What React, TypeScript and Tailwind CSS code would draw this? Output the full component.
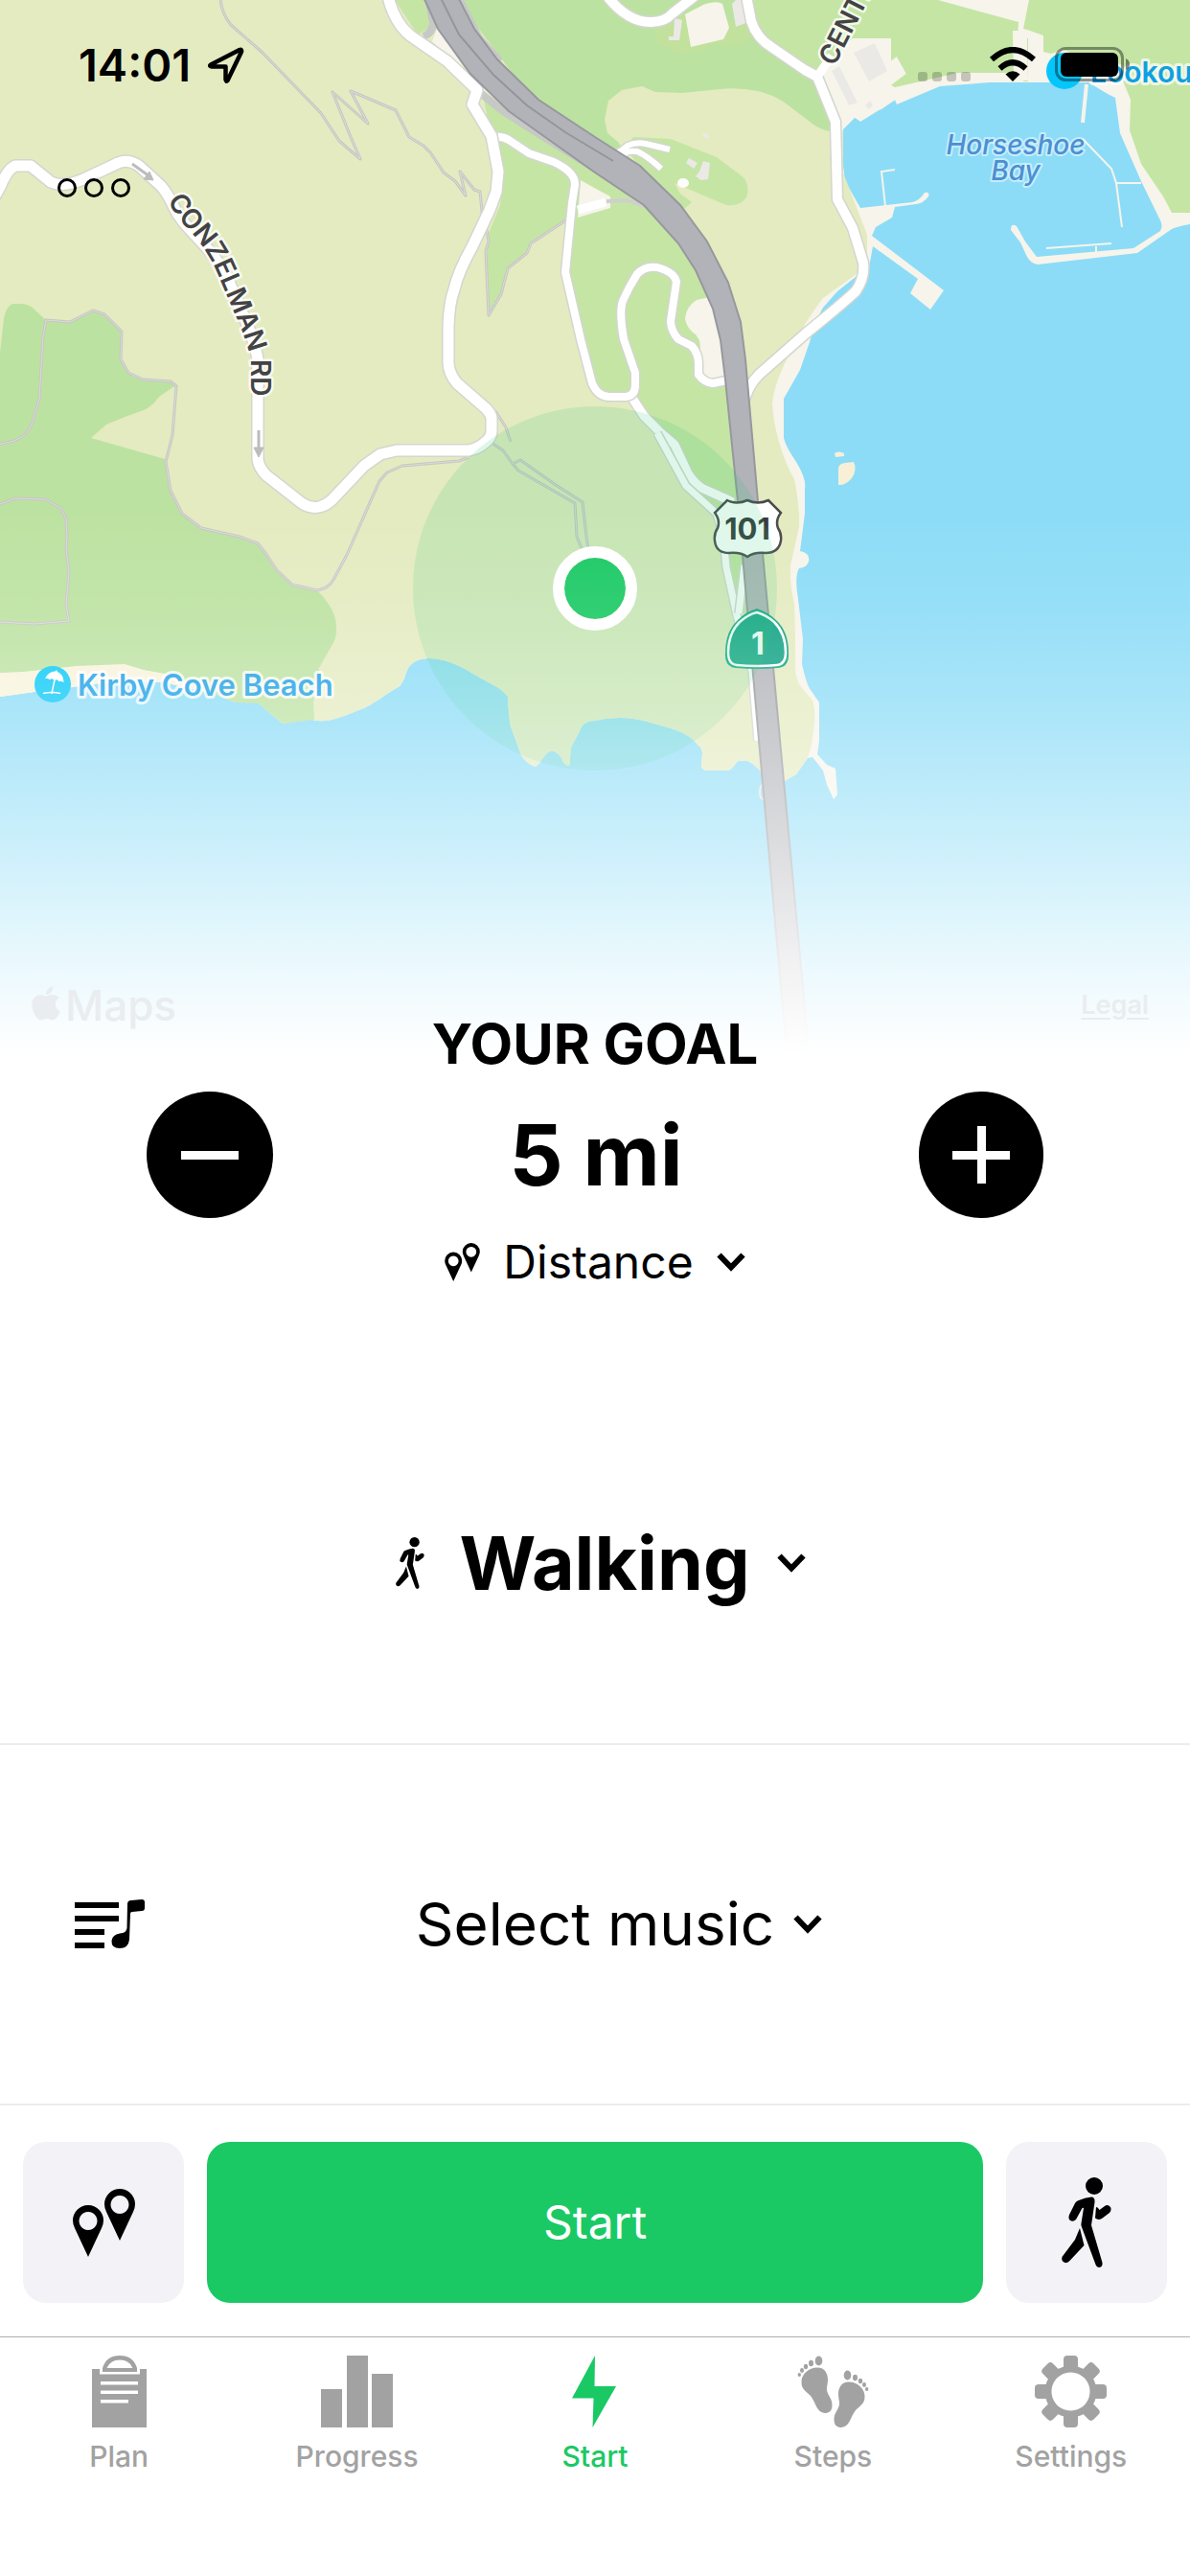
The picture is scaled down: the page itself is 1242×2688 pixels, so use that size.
import React from "react";
import { FaApple } from "react-icons/fa";

const SHORE_LEFT =
  "L831,808 L819,815 C805,811 798,806 795,806 C788,798 782,794 779,794 Q771,793 769,795 Q764,803 760,804 H737 Q731,803 732,797 L733,787 Q733,780 728,777 Q720,766 700,760 L679,754 Q650,745 621,752 Q608,752 605,763 L597,778 Q595,782 595,794 Q595,800 592,799 Q588,797 586,791 Q576,776 566,792 Q560,802 556,799 Q548,795 544,788 L533,758 Q531,750 530,727 Q524,719 515,715 L492,702 Q468,687 447,687 Q428,688 424,702 Q421,712 417,716 Q412,719 404,724 Q385,738 372,742 Q348,752 339,752 Q330,753 323,750 L295,755 L270,734 Q264,731 245,733 L226,724";

const CONZELMAN =
  "M-6,206 L0,195 Q8,176 16,173 H32 L53,190 Q66,196 87,187 L119,172 Q132,164 145,173 L168,194 Q175,202 181,215 C192,240 215,250 236,287 L250,320 Q266,355 269,375 V479 Q270,488 278,496 L315,525 Q324,531 333,529 Q341,527 347,521 L380,486 L397,474 L414,470 H489 Q500,468 507,461 Q513,456 513,450 V436 Q512,431 507,426 L477,400 Q467,388 468,375 V340 Q469,315 474,302 Q478,284 493,257 L511,219 L518,200 L520,179 L513,142 L493,109 L498,94 L467,64 L428,37 Q410,22 404,-8";

const LOOP_ROAD =
  "M517,143 Q524,142 531,146 L552,160 L578,169 Q601,180 600,193 L597,212 L590,284 L606,354 L618,400 Q624,414 636,414 H653 Q663,413 663,402 V389 L651,354 Q646,325 650,314 Q656,300 665,286 Q673,277 686,279 Q704,284 706,294 L700,335 Q700,345 708,354 L722,361 Q729,369 729,379 V391 Q735,399 744,400 L758,397";

const TRAILS = [
  "M230,-2 Q231,14 241,26 L273,54 L335,118 L354,147 L376,166 L366,143 L347,96 L384,129 L366,95 L413,115 L427,143 L442,152 L449,159 L463,180 L475,189 L486,204 L480,179 L495,198 L501,200 L504,230",
  "M508,240 L510,252 L507,262 L510,329 L523,307 L530,280 L550,264 L554,254 L592,229",
  "M-2,464 L15,460 L26,454 L33,443 L41,416 L45,350 L48,334 L73,336 L97,324 L109,328 L127,346 L126,375 L134,389 L149,396 L178,398 L184,403 L180,454 L173,482 L178,512 L190,536 L210,551 L250,560 L269,567 L277,577 L289,595 L305,610 L331,616 Q343,614 348,605 L362,579 L396,502 L404,493 L420,486 L479,481 L489,477",
  "M-2,527 L16,520 L47,521 L63,530 L69,541 L70,560 L69,572 L72,597 L69,631 L72,648 L36,651 L-2,649",
  "M517,429 L528,446 L533,461",
  "M513,462 L525,470 L535,484 L543,480 L580,506 L608,524 L612,560 L617,590",
  "M535,484 L541,491 L600,525 L602,560 L607,572 L610,590",
];

const GREEN_LIGHT = "#c5e5a5";
const GREEN = "#bce2a1";
const SAND = "#f7f4eb";

function Road({ d, width }: { d: string; width: number }) {
  return (
    <g fill="none" strokeLinejoin="round">
      <path d={d} stroke="#d4d6d0" strokeWidth={width + 3} />
      <path d={d} stroke="#fff" strokeWidth={width} />
    </g>
  );
}

function TrailMap() {
  return (
    <svg
      viewBox="0 0 1242 1100"
      preserveAspectRatio="xMidYMin slice"
      className="block h-full w-full font-[Inter,sans-serif]"
      role="img"
      aria-label="Map of the current area"
    >
      <defs>
        <linearGradient id="fade" x1="0" y1="0" x2="0" y2="1">
          <stop offset="0" stopColor="#fff" stopOpacity="0" />
          <stop offset="0.19" stopColor="#fff" stopOpacity="0.1" />
          <stop offset="0.39" stopColor="#fff" stopOpacity="0.29" />
          <stop offset="0.64" stopColor="#fff" stopOpacity="0.58" />
          <stop offset="0.82" stopColor="#fff" stopOpacity="0.81" />
          <stop offset="1" stopColor="#fff" />
        </linearGradient>
        <path id="conzelman-label" d="M175,209 C190,240 210,244 229,290 L243,323 Q261,362 262,380 V440" />
        <path id="center-label" d="M871,70 L922,-31" />
      </defs>
      <rect width="1242" height="1100" fill="#8cdcf7" />

      {/* coastline */}
      <path
        fill={SAND}
        d={`M0,0 H1242 V234 Q1230,236 1223,239 L1187,264 L1083,276 Q1075,275 1071,266 L1065,253 L1055,240 Q1055,232 1061,236 L1070,252 L1082,268 L1183,259 L1211,241 Q1214,236 1211,230 L1191,189 L1169,139 L1164,102 L1156,98 L1136,86 H1033 L981,90 L936,109 L934,104 L920,114 L892,123 L880,135 L878,157 L882,189 L898,217 L952,211 Q960,209 965,201 Q971,200 969,205 Q964,212 956,213 L934,216 L931,227 L914,237 L910,246 L985,303 L971,323 L950,306 L958,291 L911,257 L907,279 L898,285 L874,304 L859,321 L851,336 L845,357 L835,386 L818,416 V457 Q820,466 831,482 Q842,500 840,510 L840,536 L835,575 Q846,577 844,586 Q842,592 834,593 Q829,602 833,625 L838,667 L837,693 Q842,715 846,720 L855,733 V773 L853,787 L863,798 L872,802 L874,829 L870,834 L863,819 L859,804 L848,790 L843,791 ${SHORE_LEFT} L170,712 L119,711 L85,716 L36,722 L0,727 Z`}
      />
      <path
        fill="#e4ebc0"
        d={`M0,0 H800 L880,140 L880,180 L905,245 V278 L859,311 Q838,338 827,364 Q808,398 806,421 Q807,440 813,461 Q820,485 829,500 Q835,530 834,550 L825,590 Q824,610 829,630 L830,660 V700 Q832,712 837,718 L848,731 Q853,745 847,777 L843,791 ${SHORE_LEFT} L178,704 L150,699 L130,693 L79,695 L24,701 L0,702 Z`}
      />
      <path fill="#f9f3dc" d="M0,702 L24,701 L79,695 L125,692 Q133,692 140,697 L150,700 L178,704 L226,724 L160,710 L100,713 L36,722 L0,727Z" />

      {/* woodland */}
      <path
        fill={GREEN}
        d="M0,368 L4,332 Q7,319 13,317 H24 Q32,318 38,325 L48,334 L73,336 L97,324 L109,328 L127,346 L126,375 L134,389 L149,396 L178,398 L182,403 L166,414 Q159,424 150,428 L133,434 L111,443 L95,457 L172,479 L178,512 L190,536 L210,551 L250,560 L269,567 L277,577 L289,595 L305,610 L331,616 Q351,636 351,654 Q352,666 346,674 L333,697 L327,733 L328,751 L295,755 L270,734 L245,733 L222,724 L178,704 L150,699 L130,693 L79,695 L24,701 L0,702Z"
      />
      <path
        fill={GREEN}
        d="M477,0 H800 L852,80 L878,137 L867,137 Q858,136 849,130 L819,107 Q805,98 791,95 Q770,91 752,93 L712,97 L684,96 L670,90 L649,94 L635,105 L631,125 L634,139 L645,148 L660,170 L560,110Z"
      />
      <path fill={GREEN_LIGHT} d="M780,0 H979 L1063,23 L1060,76 H1000 L930,92 L930,40 L890,40 L855,78 L800,50Z" />
      <path fill={GREEN_LIGHT} d="M1074,0 H1242 V222 H1223 L1214,205 L1191,171 L1179,136 L1180,104 L1171,82 L1150,75 L1100,45 L1089,37 L1072,31 L1068,30Z" />
      <path fill={SAND} d="M1057,32 h15 l1,18 18,4 7,4 10,-5 20,30 h-70Z M894,43 l9,5 3,15 19,4 11,-8 10,18 -16,12 16,8 -48,30 -27,-20 -13,-30Z" />
      <path fill={GREEN_LIGHT} d="M1060,40 h13 v45 h-5 Z M936,59 h60 v15 l-66,15 16,-12Z M1088,40 l1,14 8,2 12,-4 12,3 v-25 h-30Z" />
      <path fill={SAND} d="M1057,32 h15 v18 l1,34 h-12Z M1079,38 l10,-1 v47 h-11Z" />
      <path
        fill={GREEN_LIGHT}
        d="M505,104 L512,141 L519,146 L525,179 L522,214 L509,246 L508,307 L511,329 L523,307 L531,280 L550,264 L554,254 L592,229 L590,284 L616,393 L633,420 L659,414 L716,507 L750,545 L760,592 L775,640 L800,640 L780,420 L760,320 L700,220 L621,160Z"
      />
      <path fill={GREEN_LIGHT} d="M661,143 L700,145 L748,164 L777,186 Q783,198 779,206 Q772,216 758,214 L720,198 L704,191 L710,202 L722,211 L714,218 L668,175 L653,154Z" />
      <path fill={GREEN_LIGHT} d="M412,0 H443 L450,28 L436,36Z" />
      <path fill="#c2e19c" d="M683,28 Q684,42 688,47 L713,57 L738,50 L742,44 L757,48 Q780,48 785,36 L776,24 L700,14Z" />
      <path fill={SAND} d="M457,28 L451,43 L500,90 L531,114 L485,72Z M606,188 L622,197 L637,205 L637,217 L603,227Z M745,309 L727,313 Q716,320 715,333 Q717,343 726,349 L730,355 L734,390 L744,398 L760,395 V330Z M715,15 L734,5 Q748,0 754,4 L761,29 L755,41 L721,49Z" />
      <path
        fill="#ebe9e6"
        d="M704,19 l8,2 -3,21 h-11 v-4 h5Z M764,4 l6,-6 8,2 3,23 -13,5Z M891,55 l22,-10 13,29 -19,11Z M868,74 l8,-5 19,38 -9,3Z M903,110 l5,-5 3,5 -4,4Z M719,165 l9,5 -4,6 -8,-6Z M734,168 l7,2 -2,17 -7,1 -6,-4 4,-5Z M735,138 l6,4 -3,3 -5,-3Z"
      />
      <ellipse cx="713" cy="191" rx="6" ry="5" fill="#fdfdfb" />
      <path fill="#f7f0d6" d="M875,489 Q875,484 882,483 L891,482 Q895,490 889,499 Q882,507 875,506Z M871,473 q4,-3 10,0 v3 l-9,1Z" />
      <g fill="none" stroke={SAND} strokeWidth="2">
        <path d="M934,177 l-14,2 4,36 M1130,145 l30,31 5,15 h26 M1165,191 l6,46 M1092,259 l68,-5 M1144,255 v8" />
        <path d="M1134,88 l-4,40" strokeWidth="4" />
        <path d="M798,818 q-5,0 -5,9 q0,8 5,7" stroke="#e8e6df" />
      </g>

      <g fill="none" strokeLinejoin="round">
        {TRAILS.map((d) => (
          <path key={d} d={d} stroke="#c6c6c3" strokeWidth="3" />
        ))}
        {TRAILS.map((d) => (
          <path key={d} d={d} stroke="#dcdcd8" strokeWidth="1" />
        ))}
      </g>

      {/* streets */}
      <path d="M447,-2 L452,24 Q452,34 442,38 M480,0 L500,40 L522,64 M500,96 L525,116 L566,142 L621,176 L672,211" fill="none" stroke="#c6c9c6" strokeWidth="8" />
      <path d="M633,210 L655,209 L676,216 L690,222" fill="none" stroke="#cfcfcc" strokeWidth="4" />
      <Road d="M659,414 L672,434 L690,452 L704,464 L718,494 Q726,506 734,510 L765,524" width={9} />
      <Road d="M686,452 L716,507 L748,536 L755,560 L758,592 L769,642 L785,700 L791,773" width={7} />
      <Road d="M777,590 L771,640" width={7} />
      <Road d="M621,165 H633 Q645,161 655,152 Q664,148 674,150 L699,156 M668,202 Q650,176 650,166 Q650,156 665,158 Q676,163 690,176" width={6} />
      <path d="M603,219 L632,211" stroke="#fff" strokeWidth="9" />
      <Road d={LOOP_ROAD} width={8} />
      <Road d={CONZELMAN} width={11} />
      <Road d="M632,-6 Q655,24 680,23 Q694,23 702,14 L730,-8" width={10} />
      <Road d="M779,-4 L784,22 Q790,40 805,49 L840,73 L853,80 L872,127 L874,208 L890,238 L901,274 Q903,290 893,304 Q878,318 842,347 L792,391 Q779,404 775,425" width={10} />
      <path d="M853,80 L868,58" stroke="#fff" strokeWidth="9" />

      {/* highway */}
      <path
        fill="#b2b3b9"
        stroke="#97989d"
        strokeWidth="2"
        d="M442,-3 L457,30 L491,77 L531,116 L621,180 L672,214 L708,254 L726,282 L744,322 L752,355 L757,396 L770,523 L795,806 L818,1063 L822,1103 H844 L841,1063 L818,815 L791,523 L778,375 L773,336 L760,295 L738,252 L710,214 L668,173 L621,143 L562,104 L519,62 L495,30 L478,-3Z"
      />
      <path fill="none" stroke="#94959b" strokeWidth="2" d="M460,-2 L479,36 L515,78 L550,110 L590,138 L640,168" />

      {/* road shields */}
      <g transform="translate(745 521)">
        <path
          d="M14,1 Q24,6 35,1 Q46,6 57,1 L70,14 Q64,22 67,30 Q71,36 70,43 Q68,56 54,56 Q42,55 35,60 Q28,55 16,56 Q2,56 1,43 Q0,36 4,30 Q7,22 1,14Z"
          fill="#fff"
          stroke="#4a4a4e"
          strokeWidth="2.5"
        />
        <text x="35" y="42" textAnchor="middle" fontSize="31" fontWeight="700" fill="#36383b">101</text>
      </g>
      <g transform="translate(757 635)">
        <path d="M33,0 Q45,4 53,12 Q66,24 66,46 Q67,61 55,62 Q33,64 11,62 Q-1,61 0,46 Q0,24 13,12 Q22,3 33,0Z" fill="#0ea283" />
        <path d="M33,4 Q43,7 51,14 Q63,26 63,46 Q63,58 54,59 Q33,61 12,59 Q3,58 3,46 Q3,26 15,14 Q24,6 33,4Z" fill="none" stroke="#fff" strokeWidth="2.5" />
        <text x="34" y="48" textAnchor="middle" fontSize="32" fontWeight="700" fill="#fff">1</text>
      </g>

      {/* direction arrows */}
      <g fill="#bcbcbc" stroke="#bcbcbc">
        <path d="M138,171 L156,184" strokeWidth="3" />
        <path d="M160,188 l-10,-1 6,-8Z" strokeWidth="1" />
        <path d="M270,449 V470" strokeWidth="3" />
        <path d="M270,477 l-5,-10 h10Z" strokeWidth="1" />
      </g>

      {/* location accuracy */}
      <circle cx="621" cy="614" r="190" fill="#1ec96c" fillOpacity="0.14" />

      {/* place labels */}
      <g fontWeight="600" strokeLinejoin="round" className="[paint-order:stroke]">
        <g fontSize="28" fill="#434343" stroke="#fff" strokeWidth="5" strokeOpacity="0.8">
          <text>
            <textPath href="#conzelman-label">CONZELMAN RD</textPath>
          </text>
          <text>
            <textPath href="#center-label">CENTE</textPath>
          </text>
        </g>
        <g fontSize="28" fontStyle="italic" fontWeight="500" textAnchor="middle" fill="#4c8fd3" stroke="#fff" strokeWidth="4" strokeOpacity="0.5">
          <text x="1060" y="161">Horseshoe</text>
          <text x="1060" y="188">Bay</text>
        </g>
        <circle cx="1111" cy="74" r="19" fill="#05c6fb" />
        <text x="1138" y="86" fontSize="30" fill="#119fe2" stroke="#fff" strokeWidth="6" strokeOpacity="0.7">Lookou</text>
        <circle cx="55" cy="714" r="19" fill="#08c9f7" />
        <g transform="translate(36 695) rotate(12 19 19)">
          <path d="M10,15 Q12,6 20,5 Q28,6 30,15 Q27,13 25,15 Q22,12 20,15 Q17,12 15,15 Q12,13 10,15Z" fill="#fff" />
          <path d="M20,4 V29" stroke="#fff" strokeWidth="1.5" />
        </g>
        <path d="M45,723.5 q9,-2 18,0" stroke="#fff" strokeWidth="1.5" fill="none" />
        <text x="81" y="726" fontSize="31" fill="#189fe6" stroke="#fff" strokeWidth="6" strokeOpacity="0.8">Kirby Cove Beach</text>
      </g>

      <circle cx="621" cy="614" r="32" fill="#1ac964" />
      <rect y="530" width="1242" height="570" fill="url(#fade)" />
      <circle cx="621" cy="614" r="38" fill="none" stroke="#fff" strokeWidth="12" />
    </svg>
  );
}

function StatusBar() {
  return (
    <div className="absolute inset-x-0 top-0 flex items-start justify-between pt-10 pr-[63px] pl-[82px] text-black">
      <div className="flex items-center gap-[18px]">
        <span className="text-[47px] leading-[56px] font-semibold">14:01</span>
        <svg width="38" height="40" viewBox="0 0 38 40" fill="none" aria-hidden="true">
          <path d="M3,19.5 L33,4 Q35.5,3 35,6 L20.5,36 Q19,38 18.5,35 V21.5 H4 Q1,21 3,19.5Z" stroke="#000" strokeWidth="4.5" strokeLinejoin="round" />
        </svg>
      </div>
      <div className="flex items-end pt-[9px]">
        <div className="mr-5 flex gap-[5px]">
          {[0, 1, 2, 3].map((bar) => (
            <span key={bar} className="size-[10px] rounded-[3px] bg-black/20" />
          ))}
        </div>
        <svg width="48" height="36" viewBox="0 0 48 36" className="mr-5" aria-hidden="true">
          <path d="M2,13 Q24,-7 46,13" fill="none" stroke="#000" strokeWidth="6" />
          <path d="M10.5,22.5 Q24,10 37.5,22.5" fill="none" stroke="#000" strokeWidth="6" />
          <path d="M24,36 L16.5,28.5 Q24,22 31.5,28.5Z" />
        </svg>
        <svg width="78" height="36" viewBox="0 0 78 36" aria-hidden="true">
          <rect x="1.5" y="1.5" width="69" height="33" rx="10" fill="none" stroke="#000" strokeOpacity="0.4" strokeWidth="3" />
          <rect x="6" y="6" width="60" height="25" rx="6" />
          <path d="M74,12 Q78,14 78,18 Q78,22 74,24Z" fillOpacity="0.45" />
        </svg>
      </div>
    </div>
  );
}

function PinsIcon({ className }: { className: string }) {
  const pin = "M0,16 A16,16 0 0 1 32,16 Q32,20 30,24 L16,54 L2,24 Q0,20 0,16Z M16,7 a9.5,9.5 0 1 0 .01,0Z";
  return (
    <svg viewBox="0 0 65 71" className={className} fill="currentColor" fillRule="evenodd" aria-hidden="true">
      <path d={pin} transform="translate(0 17)" />
      <path d={pin} transform="translate(33 0)" />
    </svg>
  );
}

function WalkerIcon({ className }: { className: string }) {
  return (
    <svg viewBox="0 0 52 94" className={className} fill="currentColor" aria-hidden="true">
      <circle cx="34" cy="9" r="9" />
      <path d="M18,24 Q24,21 31,20.5 Q35,20.5 34.5,26 L31,50 L42.5,89 Q43,93.5 39.5,94 Q36.5,94 35.5,91 L21,52 Q20,50 20.5,48 L23,32 Q22,31 21,33 L15,44 Q12,47 9,45 Q6.5,43 8,39 L14,27 Q15.5,24.5 18,24Z" />
      <path d="M36,31 Q38,31 39.5,34 L45,30 Q48,27.5 51,31 Q52.5,34 50,37 L42,43 Q38,45 35,42.5Z" />
      <path d="M19,53 L23.5,71 L8,87.5 Q4.5,91 1,87.5 Q-1,84 2,81 L14,65Z" />
    </svg>
  );
}

function Chevron() {
  return (
    <svg width="30" height="21" viewBox="0 0 30 21" fill="none" aria-hidden="true">
      <path d="M2.5,2.5 L15,15.5 L27.5,2.5" stroke="#000" strokeWidth="6" />
    </svg>
  );
}

function MusicIcon() {
  return (
    <svg width="74" height="52" viewBox="0 0 74 52" aria-hidden="true">
      <path d="M0,3 h46 v6 h-46Z M0,17 h46 v6 h-46Z M0,31 h31 v6 h-31Z M0,45 h31 v6 h-31Z" />
      <path d="M55,5 Q55,1 59,1 L70,0 Q73,0 73,3 V9 Q73,12 70,12 L60,13 Q58,13 58,15 L57,42 Q56,51 47,51 Q38,51 38.5,43 Q39,37 47,35.5 Q54,35 54.5,30Z" />
    </svg>
  );
}

const tabs = [
  {
    label: "Plan",
    icon: (
      <>
        <path fillRule="evenodd" d="M9,14 H17 V19.5 H59 V14 H66 V75 H9Z M18,27 V30.5 H57 V27Z M18,36.5 V40 H57 V36.5Z M18,46 V49.5 H47 V46Z" />
        <path fillRule="evenodd" d="M20,17 V13 Q24,0 38,0 Q52,0 56,13 V17Z M24.5,13 Q28,4.5 38,4.5 Q48,4.5 51.5,13Z" />
      </>
    ),
  },
  { label: "Progress", icon: <path d="M0,35 H22 V75 H0Z M27,0 H49 V75 H27Z M53,19 H75 V75 H53Z" /> },
  { label: "Start", icon: <path d="M38,0 L37.5,32 H60 L35.5,75 L36.5,44.5 H14Z" />, active: true },
  {
    label: "Steps",
    icon: ["translate(0 0)", "translate(75 15) scale(-1 1)"].map((transform) => (
      <g key={transform} transform={transform}>
        <path d="M21,12.5 C29,12.5 32,19 32,25 C32,31 30,34 31.5,38 C33,43 36.5,45 36.5,52 C36.5,58 33,60 29,60 C20,59 20,50 14,42 C9,37 4.5,35 4.5,28 C4,20 12,12.5 21,12.5Z" />
        <ellipse cx="22.5" cy="5.5" rx="3.8" ry="5" />
        <ellipse cx="14.5" cy="8" rx="2.5" ry="3.2" />
        <ellipse cx="9" cy="11.5" rx="2.2" ry="2.7" />
        <ellipse cx="5" cy="15.5" rx="2" ry="2.4" />
        <ellipse cx="2.3" cy="20" rx="1.7" ry="2.1" />
      </g>
    )),
  },
  {
    label: "Settings",
    icon: (
      <>
        {[0, 45, 90, 135, 180, 225, 270, 315].map((angle) => (
          <rect key={angle} x="30" y="0" width="15" height="16" rx="4" transform={`rotate(${angle} 37.5 37.5)`} />
        ))}
        <path fillRule="evenodd" d="M37.5,10.5 a27,27 0 1 0 .01,0Z M37.5,17.5 a20,20 0 1 1 -.01,0Z" />
      </>
    ),
  },
];

export default function App() {
  return (
    <div className="flex min-h-screen flex-col bg-white font-[Inter,sans-serif] text-black">
      <header className="relative aspect-[1242/1100] w-full overflow-hidden">
        <TrailMap />
        <StatusBar />
        <button type="button" aria-label="More options" className="absolute top-[186px] left-[60px] flex gap-2">
          {[0, 1, 2].map((dot) => (
            <span key={dot} className="size-5 rounded-full border-3 border-black" />
          ))}
        </button>
        <div className="absolute inset-x-0 bottom-6 flex items-center justify-between pr-[43px] pl-7 text-[#e9edef]">
          <span className="flex items-center text-[44px] leading-[54px] font-medium">
            <FaApple className="mb-1 size-10" aria-hidden="true" />
            Maps
          </span>
          <a href="#legal" className="text-[27px] font-semibold underline underline-offset-4">
            Legal
          </a>
        </div>
      </header>

      <main className="relative -mt-[47px] flex flex-1 flex-col">
        <section className="flex flex-col items-center pb-24">
          <h1 className="text-[58px] leading-[72px] font-bold">YOUR GOAL</h1>
          <div className="mt-3.5 flex w-full items-center justify-between px-[153px]">
            <button type="button" aria-label="Decrease goal" className="flex size-[132px] items-center justify-center rounded-full bg-black">
              <span className="h-[9px] w-[60px] bg-white" />
            </button>
            <output className="text-[88px] leading-[104px] font-bold">5 mi</output>
            <button type="button" aria-label="Increase goal" className="grid h-[132px] w-[130px] place-items-center rounded-full bg-black">
              <span className="col-start-1 row-start-1 h-[9px] w-[60px] bg-white" />
              <span className="col-start-1 row-start-1 h-[60px] w-[9px] bg-white" />
            </button>
          </div>
          <button type="button" className="mt-4 flex items-center gap-6 text-[48px] leading-[60px]">
            <PinsIcon className="h-10 w-[37px]" />
            Distance
            <Chevron />
          </button>
        </section>

        <button type="button" className="flex items-center justify-center gap-7 border-b-2 border-[#ececec] py-[140px] pl-3 text-[77px] leading-[96px] font-bold">
          <WalkerIcon className="mr-2 h-[54px] w-[30px]" />
          Walking
          <Chevron />
        </button>

        <button type="button" className="grid grid-cols-[1fr_auto_1fr] items-center gap-5 border-b-2 border-[#ececec] px-[78px] py-[147px] text-[62px] leading-[80px]">
          <MusicIcon />
          <span>Select music</span>
          <Chevron />
        </button>

        <section className="flex gap-6 px-6 pt-[38px] pb-[35px]">
          <button type="button" aria-label="Route" className="flex size-[168px] items-center justify-center rounded-3xl bg-[#f2f2f7]">
            <PinsIcon className="h-[71px] w-[65px]" />
          </button>
          <button type="button" className="h-[168px] flex-1 rounded-3xl bg-[#1ac964] text-[48px] text-white">
            Start
          </button>
          <button type="button" aria-label="Activity" className="flex size-[168px] items-center justify-center rounded-3xl bg-[#f2f2f7]">
            <WalkerIcon className="h-[94px] w-[52px]" />
          </button>
        </section>

        <nav className="grid flex-1 grid-cols-5 border-t border-[#b0b0b0] pt-[19px]">
          {tabs.map((tab) => (
            <a
              key={tab.label}
              href={`#${tab.label.toLowerCase()}`}
              aria-current={tab.active ? "page" : undefined}
              className={`flex flex-col items-center gap-3 text-[30px] leading-9 font-medium ${tab.active ? "text-[#1ac964]" : "text-[#a2a2a2]"}`}
            >
              <svg width="75" height="75" viewBox="0 0 75 75" fill="currentColor" aria-hidden="true">
                {tab.icon}
              </svg>
              {tab.label}
            </a>
          ))}
        </nav>
      </main>
    </div>
  );
}
